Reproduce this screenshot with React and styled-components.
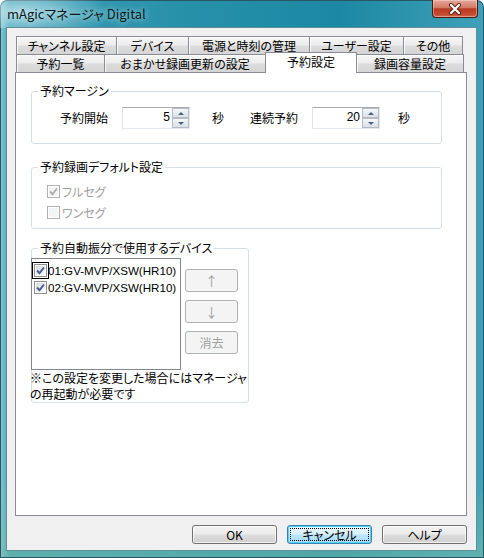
import React from 'react';
import styled, { createGlobalStyle, css } from 'styled-components';

const GlobalStyle = createGlobalStyle`
  html, body { margin: 0; padding: 0; background: #fff; }
  body {
    font-family: "Noto Sans CJK JP", "Liberation Sans", sans-serif;
    font-size: 12px;
    font-feature-settings: "palt";
    color: #000;
  }
`;

const Window = styled.div`
  width: 484px;
  height: 558px;
  display: flex;
  flex-direction: column;
  border-radius: 7px 7px 0 0;
  overflow: hidden;
  box-shadow: inset 0 0 0 1px #2c5563;
  background:
    linear-gradient(180deg, rgba(255, 255, 255, 0) 85%, rgba(120, 190, 170, 0.6) 100%),
    linear-gradient(90deg, #8ccbd7 0%, #3c9db4 2%, #2690a9 40%, #1c88a3 70%, #3ea1b8 100%);
`;

const TitleBar = styled.div`
  height: 28px;
  flex-shrink: 0;
  display: flex;
  align-items: flex-start;
  background: radial-gradient(ellipse 90px 30px at 20px 12px, rgba(210, 240, 245, 0.7), rgba(210, 240, 245, 0) 100%);
`;

const Title = styled.div`
  padding-left: 7px;
  line-height: 27px;
  font-size: 13px;
  color: #0a1a20;
  text-shadow: 0 0 6px rgba(255, 255, 255, 0.8);
`;

const CloseButton = styled.div`
  margin-left: auto;
  margin-right: 6px;
  width: 46px;
  height: 18px;
  box-sizing: border-box;
  border: 1px solid #4e1810;
  border-top: none;
  border-radius: 0 0 4px 4px;
  background: linear-gradient(180deg, #e6a99b 0%, #d27a64 45%, #b63b22 52%, #c54a2f 85%, #d76c4d 100%);
  box-shadow: inset 0 0 0 1px rgba(255, 220, 210, 0.45);
  display: flex;
  align-items: center;
  justify-content: center;
`;

const Client = styled.div`
  flex: 1;
  margin: 0 8px 8px 7px;
  padding: 8px 9px 0 8px;
  display: flex;
  flex-direction: column;
  background: #f0f0f0;
  box-shadow: 0 0 0 1px #5f8f9c;
`;

const TabRow = styled.div`
  display: flex;
  align-items: flex-start;
  height: 18px;
  padding-left: 1px;
  position: relative;
  z-index: ${(p) => (p.$front ? 2 : 1)};
`;

const Tab = styled.div`
  width: ${(p) => p.$w}px;
  height: 18px;
  flex-shrink: 0;
  box-sizing: border-box;
  border: 1px solid #898c95;
  border-bottom: none;
  margin-right: -1px;
  text-align: center;
  line-height: 17px;
  white-space: nowrap;
  background: linear-gradient(180deg, #f6f6f6 0%, #ececec 48%, #dcdcdc 52%, #d5d5d5 100%);
  box-shadow: inset 1px 1px 0 rgba(255, 255, 255, 0.8);
  ${(p) =>
    p.$active &&
    css`
      position: relative;
      height: 21px;
      margin-top: -2px;
      background: #fff;
      box-shadow: none;
      z-index: 3;
    `}
`;

const Panel = styled.div`
  width: 452px;
  height: 444px;
  box-sizing: border-box;
  border: 1px solid #898c95;
  background: #fff;
  padding: 11px 0 0 15px;
  position: relative;
  z-index: 0;
`;

const Group = styled.fieldset`
  width: ${(p) => p.$w}px;
  box-sizing: border-box;
  margin: ${(p) => p.$top || 0}px 0 0 0;
  padding: 0;
  border: 1px solid #d5dfe5;
  border-radius: 3px;
  min-width: 0;
`;

const Legend = styled.legend`
  margin-left: 6px;
  padding: 0 2px;
  line-height: 14px;
  font-size: 12px;
`;

const MarginRow = styled.div`
  display: flex;
  align-items: center;
  height: 22px;
  margin-top: 9px;
  padding: 0 0 14px 28px;
`;

const FieldLabel = styled.span`
  margin-left: ${(p) => p.$ml || 0}px;
  white-space: nowrap;
  line-height: 14px;
`;

const SpinBox = styled.div`
  margin-left: ${(p) => p.$ml || 0}px;
  width: 68px;
  height: 22px;
  box-sizing: border-box;
  border: 1px solid;
  border-color: #abadb3 #e3e9ef #e3e9ef #e2e3ea;
  background: #fff;
  display: flex;
`;

const SpinValue = styled.div`
  flex: 1;
  text-align: right;
  padding-right: 2px;
  line-height: 19px;
  font-family: "Liberation Sans", sans-serif;
`;

const SpinButtons = styled.div`
  width: 17px;
  display: flex;
  flex-direction: column;
`;

const SpinButton = styled.div`
  flex: 1;
  box-sizing: border-box;
  border: 1px solid #b5bcc6;
  background: linear-gradient(180deg, #f6f8fa 0%, #e6ebef 50%, #d9e0e6 100%);
  display: flex;
  align-items: center;
  justify-content: center;
  &::after {
    content: "";
    border-left: 3px solid transparent;
    border-right: 3px solid transparent;
    ${(p) =>
      p.$down
        ? css`border-top: 3px solid #4d6185;`
        : css`border-bottom: 3px solid #4d6185;`}
  }
`;

const CheckList = styled.div`
  padding: 7px 0 5px 15px;
`;

const CheckRow = styled.div`
  display: flex;
  align-items: center;
  height: ${(p) => p.$h || 21}px;
  gap: ${(p) => (p.$latin ? 1 : 2)}px;
  color: ${(p) => (p.$disabled ? '#a0a0a0' : '#000')};
  white-space: nowrap;
  font-family: ${(p) => (p.$latin ? '"Liberation Sans", sans-serif' : 'inherit')};
  font-size: ${(p) => (p.$latin ? 11.6 : 12)}px;
`;

const Box = styled.span`
  width: 13px;
  height: 13px;
  flex-shrink: 0;
  box-sizing: border-box;
  border: 1px solid ${(p) => (p.$disabled ? '#b1b1b1' : '#8e8f8f')};
  background: ${(p) =>
    p.$disabled ? '#f4f4f4' : 'linear-gradient(135deg, #cfd3d8 0%, #eef0f2 60%, #ffffff 100%)'};
  box-shadow: inset 0 0 0 1px #fff;
  display: flex;
  align-items: center;
  justify-content: center;
  outline: ${(p) => (p.$focus ? '1px solid #000' : 'none')};
  outline-offset: 1px;
`;

const DeviceArea = styled.div`
  display: flex;
  align-items: flex-start;
  margin: 3px 0 0 -1px;
`;

const ListBox = styled.div`
  width: 150px;
  height: 112px;
  box-sizing: border-box;
  border: 1px solid #828790;
  background: #fff;
  padding: 3px 0 0 2px;
`;

const SideButtons = styled.div`
  margin-left: 4px;
  padding-top: 11px;
  display: flex;
  flex-direction: column;
  gap: 8px;
`;

const SideButton = styled.div`
  width: 53px;
  height: 23px;
  box-sizing: border-box;
  border: 1px solid #adb2b5;
  border-radius: 3px;
  background: #f4f4f4;
  color: #a0a0a0;
  display: flex;
  align-items: center;
  justify-content: center;
  font-size: ${(p) => (p.$arrow ? 13 : 12)}px;
`;

const Note = styled.div`
  margin: 0 0 0 -2px;
  line-height: 16px;
  white-space: nowrap;
`;

const ButtonBar = styled.div`
  display: flex;
  justify-content: flex-end;
  gap: 10px;
  margin-top: 9px;
`;

const DialogButton = styled.div`
  width: 85px;
  height: 19px;
  box-sizing: border-box;
  border: 1px solid #707070;
  border-radius: 3px;
  background: linear-gradient(180deg, #f2f2f2 0%, #ebebeb 48%, #dddddd 52%, #cfcfcf 100%);
  box-shadow: inset 0 0 0 1px rgba(255, 255, 255, 0.7);
  display: flex;
  align-items: center;
  justify-content: center;
  line-height: 15px;
  position: relative;
  ${(p) =>
    p.$focus &&
    css`
      border-color: #3c7fb1;
      box-shadow: inset 0 0 0 1px #48d7fb;
      background: linear-gradient(180deg, #eaf6fd 0%, #d9f0fc 48%, #bee6fd 52%, #a7d9f5 100%);
      &::before {
        content: "";
        position: absolute;
        inset: 2px;
        border: 1px dotted #000;
      }
    `}
`;

const Check = ({ color = '#4a5f97' }) => (
  <svg width="9" height="9" viewBox="0 0 9 9">
    <path d="M1 4.5 L3.5 7.2 L8 1.5" fill="none" stroke={color} strokeWidth="2" />
  </svg>
);

const Spin = ({ value, ml }) => (
  <SpinBox $ml={ml}>
    <SpinValue>{value}</SpinValue>
    <SpinButtons>
      <SpinButton />
      <SpinButton $down />
    </SpinButtons>
  </SpinBox>
);

const row1 = [
  ['チャンネル設定', 101],
  ['デバイス', 73],
  ['電源と時刻の管理', 122],
  ['ユーザー設定', 95],
  ['その他', 60],
];

const row2 = [
  ['予約一覧', 89],
  ['おまかせ録画更新の設定', 162],
  ['予約設定', 92, true],
  ['録画容量設定', 108],
];

const devices = ['01:GV-MVP/XSW(HR10)', '02:GV-MVP/XSW(HR10)'];

export default function App() {
  return (
    <>
      <GlobalStyle />
      <Window>
        <TitleBar>
          <Title>mAgicマネージャ Digital</Title>
          <CloseButton>
            <svg width="14" height="12" viewBox="0 0 14 12">
              <path d="M3 2 L11 10 M11 2 L3 10" stroke="#5a2418" strokeWidth="4" strokeLinecap="round" />
              <path d="M3 2 L11 10 M11 2 L3 10" stroke="#fff" strokeWidth="2.2" strokeLinecap="round" />
            </svg>
          </CloseButton>
        </TitleBar>
        <Client>
          <TabRow>
            {row1.map(([t, w]) => (
              <Tab key={t} $w={w}>{t}</Tab>
            ))}
          </TabRow>
          <TabRow $front>
            {row2.map(([t, w, a]) => (
              <Tab key={t} $w={w} $active={a}>{t}</Tab>
            ))}
          </TabRow>
          <Panel>
            <Group $w={411}>
              <Legend>予約マージン</Legend>
              <MarginRow>
                <FieldLabel>予約開始</FieldLabel>
                <Spin value="5" ml={14} />
                <FieldLabel $ml={22}>秒</FieldLabel>
                <FieldLabel $ml={26}>連続予約</FieldLabel>
                <Spin value="20" ml={14} />
                <FieldLabel $ml={18}>秒</FieldLabel>
              </MarginRow>
            </Group>
            <Group $w={411} $top={16}>
              <Legend>予約録画デフォルト設定</Legend>
              <CheckList>
                <CheckRow $disabled>
                  <Box $disabled><Check color="#b0b0b0" /></Box>
                  フルセグ
                </CheckRow>
                <CheckRow $disabled>
                  <Box $disabled />
                  ワンセグ
                </CheckRow>
              </CheckList>
            </Group>
            <Group $w={218} $top={12}>
              <Legend>予約自動振分で使用するデバイス</Legend>
              <DeviceArea>
                <ListBox>
                  {devices.map((d, i) => (
                    <CheckRow key={d} $h={17} $latin>
                      <Box $focus={i === 0}><Check /></Box>
                      {d}
                    </CheckRow>
                  ))}
                </ListBox>
                <SideButtons>
                  <SideButton $arrow>↑</SideButton>
                  <SideButton $arrow>↓</SideButton>
                  <SideButton>消去</SideButton>
                </SideButtons>
              </DeviceArea>
              <Note>
                ※この設定を変更した場合にはマネージャ
                <br />
                の再起動が必要です
              </Note>
            </Group>
          </Panel>
          <ButtonBar>
            <DialogButton>OK</DialogButton>
            <DialogButton $focus>キャンセル</DialogButton>
            <DialogButton>ヘルプ</DialogButton>
          </ButtonBar>
        </Client>
      </Window>
    </>
  );
}
